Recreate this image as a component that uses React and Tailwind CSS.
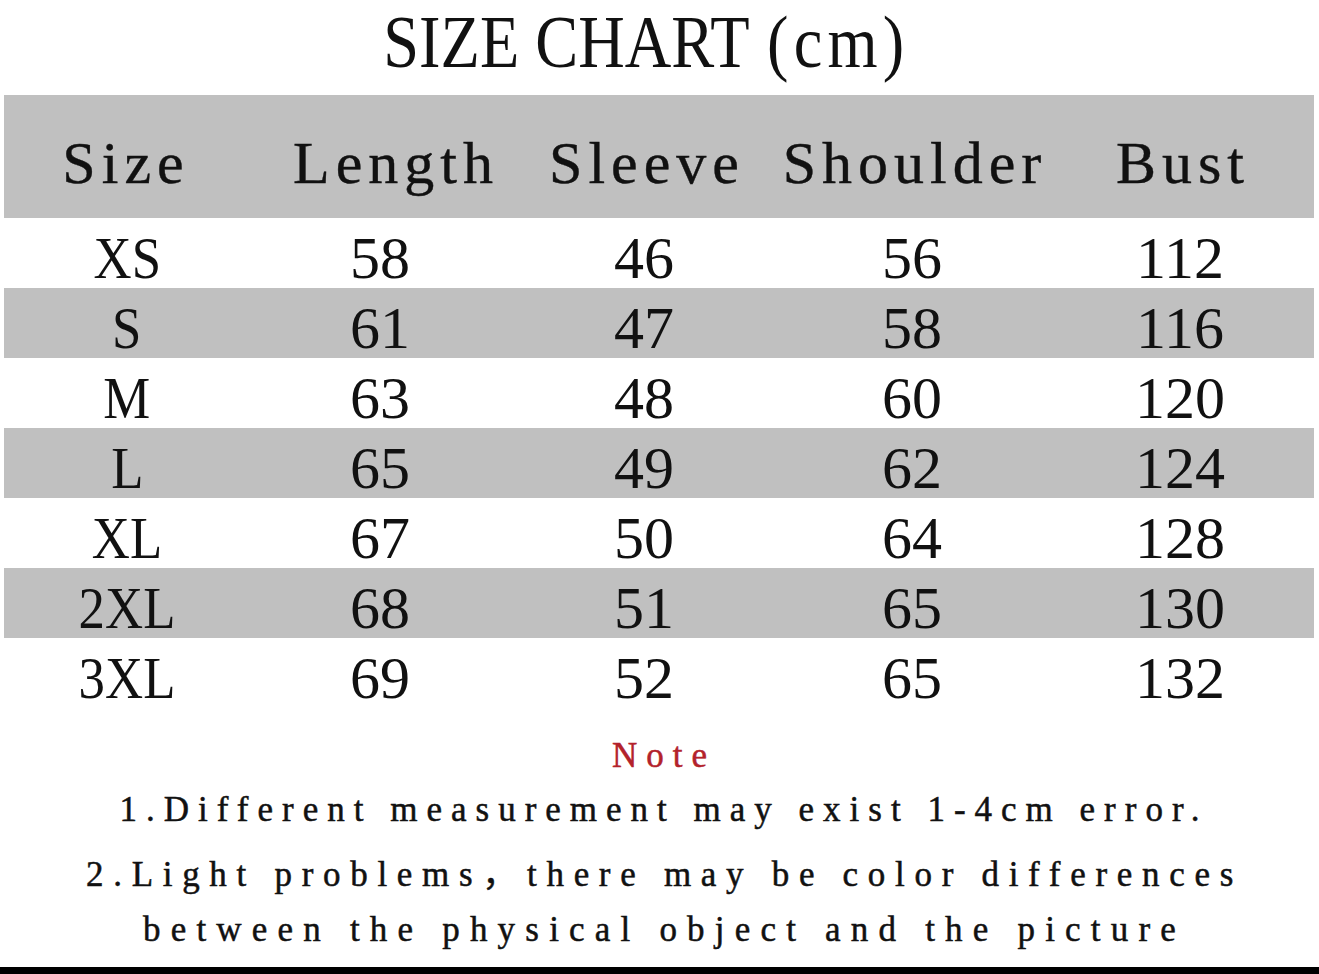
import React from 'react';

const COLS = [
  { label: 'Size', pad: 'pr-[8px]' },
  { label: 'Length', pad: 'pl-[26px]' },
  { label: 'Sleeve', pad: '' },
  { label: 'Shoulder', pad: '' },
  { label: 'Bust', pad: '' },
];

const ROWS = [
  ['XS', '58', '46', '56', '112'],
  ['S', '61', '47', '58', '116'],
  ['M', '63', '48', '60', '120'],
  ['L', '65', '49', '62', '124'],
  ['XL', '67', '50', '64', '128'],
  ['2XL', '68', '51', '65', '130'],
  ['3XL', '69', '52', '65', '132'],
];

const serif = "font-['Liberation_Serif','Noto_Sans_CJK_SC',serif]";

const grid = 'grid grid-cols-[246px_260px_268px_268px_268px]';

const noteLine = 'text-center text-[35px] leading-[35px] whitespace-nowrap [-webkit-text-stroke:0.5px_currentColor]';

const SizeChart = () => {
  return (
    <div className={`${serif} flex h-[974px] w-[1319px] flex-col overflow-hidden bg-white text-[#111]`}>
      <div className="flex h-[95px] justify-center pt-[5px] pr-[26px]">
        <span className="inline-block scale-x-87 text-[74px] leading-[74px] whitespace-nowrap">
          SIZE CHART
          <span className="ml-[20px] tracking-[6px]">(cm)</span>
        </span>
      </div>

      <div className="ml-[4px] w-[1310px]">
        <div className={`${grid} h-[123px] bg-[#c0c0c0] pt-[38px]`}>
          {COLS.map((col) => (
            <div key={col.label} className={`flex justify-center ${col.pad}`}>
              <span className="pl-[6px] text-[60px] leading-[60px] tracking-[6px] whitespace-nowrap [-webkit-text-stroke:0.4px_currentColor]">
                {col.label}
              </span>
            </div>
          ))}
        </div>

        {ROWS.map((row, r) => (
          <div key={row[0]} className={`${grid} h-[70px] ${r % 2 === 1 ? 'bg-[#c0c0c0]' : 'bg-white'}`}>
            {row.map((cell, i) => (
              <div key={i} className="flex justify-center pt-[10px] text-[60px] leading-[60px]">
                <span className={i === 0 ? 'inline-block scale-x-88' : ''}>{cell}</span>
              </div>
            ))}
          </div>
        ))}
      </div>

      <div className={`${noteLine} mt-[30px] pl-[9px] tracking-[9px] text-[#b3222b]`}>
        Note
      </div>
      <div className={`${noteLine} mt-[19px] pl-[9px] tracking-[9px]`}>
        1.Different measurement may exist 1-4cm error.
      </div>
      <div className={`${noteLine} mt-[30px] pl-[10px] tracking-[9.7px]`}>
        2.Light problems，there may be color differences
      </div>
      <div className={`${noteLine} mt-[20px] pl-[10px] tracking-[10.2px]`}>
        between the physical object and the picture
      </div>

      <div className="mt-auto h-[7px] bg-black" />
    </div>
  );
};

export default function App() {
  return <SizeChart />;
}
